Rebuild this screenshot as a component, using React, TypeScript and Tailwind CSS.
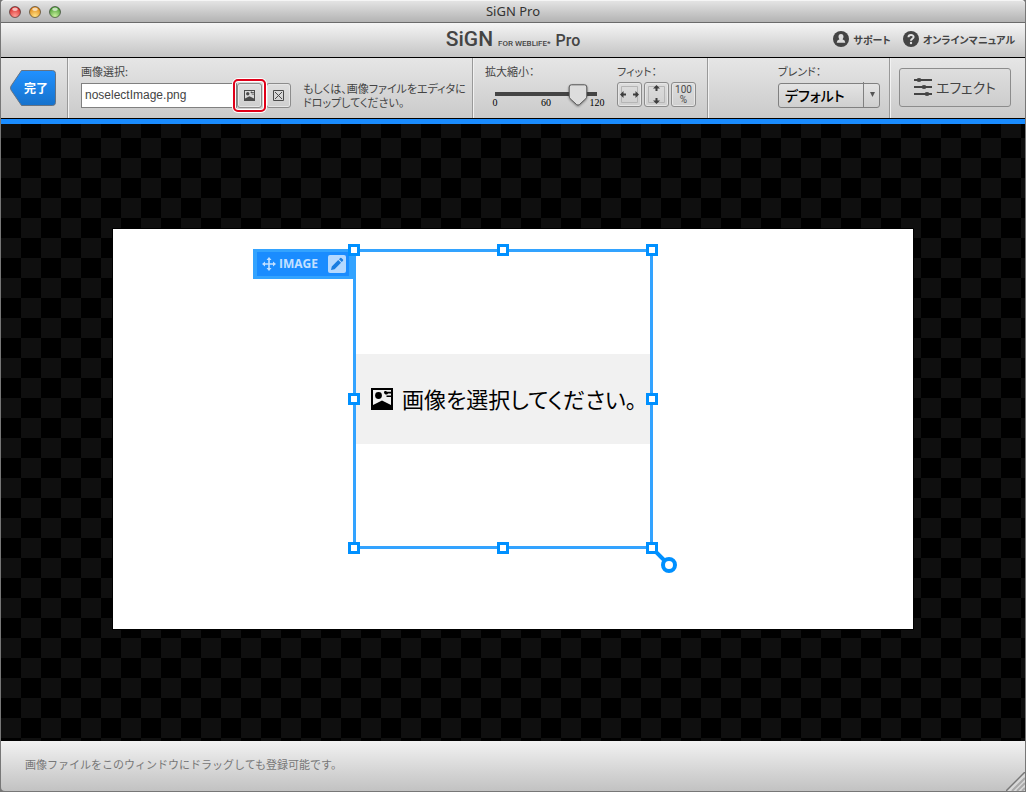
import { useState } from "react";

const PictureIcon = ({ className = "" }: { className?: string }) => (
  <svg viewBox="0 0 22 22" className={className} fill="currentColor" aria-hidden="true">
    <path fillRule="evenodd" d="M0 0H22V22H0ZM2 2V17L11 12.5L20 17V2Z" />
    <circle cx="7.5" cy="7.5" r="3.4" />
    <path d="M13 4.5C13 2.8 15.5 2.8 16 3.8H20V5.5H17C16.5 7 13.5 7 13 4.5ZM15.5 7.5H20V9H15.5Z" />
  </svg>
);

const MoveIcon = () => (
  <svg viewBox="0 0 14 14" className="size-3.5" fill="currentColor" aria-hidden="true">
    <path d="M7 0L9.5 3H7.8V6.2H11V4.5L14 7L11 9.5V7.8H7.8V11H9.5L7 14L4.5 11H6.2V7.8H3V9.5L0 7L3 4.5V6.2H6.2V3H4.5Z" />
  </svg>
);

const PencilIcon = () => (
  <svg viewBox="0 0 14 14" className="size-3.5" fill="currentColor" aria-hidden="true">
    <path d="M1 13L1.8 9.4L8.2 3L11 5.8L4.6 12.2ZM9 2.2L10.2 1Q10.8.6 11.4 1L13 2.6Q13.4 3.2 13 3.8L11.8 5Z" />
  </svg>
);

const TrafficLight = ({ label, light, dark }: { label: string; light: string; dark: string }) => (
  <button type="button" aria-label={label} className="size-3">
    <svg viewBox="0 0 12 12" className="size-3" aria-hidden="true">
      <defs>
        <radialGradient id={label} cx="0.5" cy="0.85" r="0.75">
          <stop offset="0" stopColor={light} />
          <stop offset="1" stopColor={dark} />
        </radialGradient>
      </defs>
      <circle cx="6" cy="6" r="5.5" fill={`url(#${label})`} stroke="#000" strokeOpacity="0.45" />
      <ellipse cx="6" cy="3.2" rx="2.8" ry="1.7" fill="#fff" fillOpacity="0.65" />
    </svg>
  </button>
);

const handles = [
  "-left-2 -top-2",
  "left-[141px] -top-2",
  "-right-2 -top-2",
  "-left-2 top-[141px]",
  "-right-2 top-[141px]",
  "-left-2 -bottom-2",
  "left-[141px] -bottom-2",
  "-right-2 -bottom-2",
];

const iconButton =
  "flex size-[25px] shrink-0 items-center justify-center rounded-[3px] border border-[#8c8c8c] bg-linear-to-b from-[#dedede] to-[#cfcfcf] text-[#4a4a4a] shadow-[inset_0_0_0_1px_#e6e6e6]";
const section = "border-r border-[#999] shadow-[1px_0_0_#f2f2f2] pt-1.5";
const caption = "block text-[11px] leading-[15px] text-[#444]";

const WindowHeader = () => (
  <>
    <div className="flex h-[23px] items-center rounded-t border-b border-[#6b6b6b] bg-linear-to-b from-[#e6e6e6] to-[#b3b3b3] px-2 pt-0.5 shadow-[inset_0_1px_0_#f5f5f5]">
      <div className="flex flex-1 gap-2">
        <TrafficLight label="close" light="#ff9c94" dark="#d9312f" />
        <TrafficLight label="minimize" light="#ffe083" dark="#e08b1c" />
        <TrafficLight label="zoom" light="#c7f09b" dark="#4e9e38" />
      </div>
      <h1 className="font-['Noto_Sans',sans-serif] text-[13px] text-[#333]">SiGN Pro</h1>
      <div className="flex-1" />
    </div>
    <header className="flex h-[35px] items-center border-b border-black bg-linear-to-b from-[#f5f5f5] to-[#c4c4c4] px-2.5 pb-0.5 text-[#444]">
      <div className="flex-1" />
      <div className="flex items-baseline gap-[5px] font-['Roboto',sans-serif]">
        <span className="text-[21px] leading-7 font-medium">SiGN</span>
        <span className="text-[8px] font-medium">FOR WEBLiFE*</span>
        <span className="text-base font-medium">Pro</span>
      </div>
      <nav className="flex flex-1 justify-end gap-3 text-[10px] font-bold">
        <a href="#support" className="flex items-center gap-1">
          <svg viewBox="0 0 16 16" className="size-4" aria-hidden="true">
            <circle cx="8" cy="8" r="8" fill="#444" />
            <path d="M8 3C9.7 3 10.6 4.2 10.5 5.7C10.4 7 9.8 7.8 9.5 8.3Q12.2 9 12.3 11.8H3.7Q3.8 9 6.5 8.3C6.2 7.8 5.6 7 5.5 5.7C5.4 4.2 6.3 3 8 3Z" fill="#ddd" />
          </svg>
          サポート
        </a>
        <a href="#manual" className="flex items-center gap-1">
          <svg viewBox="0 0 16 16" className="size-4" aria-hidden="true">
            <circle cx="8" cy="8" r="8" fill="#444" />
            <path d="M5.5 6.2C5.5 3.2 10.6 3.3 10.6 6C10.6 7.8 8 7.7 8 9.8" fill="none" stroke="#e2e2e2" strokeWidth="2" />
            <circle cx="8" cy="12" r="1.2" fill="#e2e2e2" />
          </svg>
          オンラインマニュアル
        </a>
      </nav>
    </header>
  </>
);

const Toolbar = () => {
  const [fileName, setFileName] = useState("noselectImage.png");
  const [scale, setScale] = useState(98);

  return (
    <div className="flex h-[61px] border-b border-black bg-linear-to-b from-[#e6e6e6] to-[#cacaca]">
      <div className={`${section} flex w-[67px] shrink-0 pl-[9px]`}>
        <button type="button" className="mt-1.5 grid h-9 w-[46px] text-xs font-bold text-white">
          <svg viewBox="0 0 46 36" className="col-start-1 row-start-1 h-9 w-[46px]" aria-hidden="true">
            <defs>
              <linearGradient id="done" x1="0" y1="0" x2="0" y2="1">
                <stop offset="0" stopColor="#2191ff" />
                <stop offset="1" stopColor="#1672cc" />
              </linearGradient>
            </defs>
            <path d="M11.5.5H42.5Q45.5.5 45.5 3.5V32.5Q45.5 35.5 42.5 35.5H11.5L1 20Q0 18 1 16Z" fill="url(#done)" stroke="#667382" />
          </svg>
          <span className="col-start-1 row-start-1 self-center pl-1.5">完了</span>
        </button>
      </div>

      <div className={`${section} min-w-0 flex-1 pl-[13px]`}>
        <label htmlFor="file" className={caption}>画像選択:</label>
        <div className="flex items-center">
          <div className="relative mt-[3px] flex">
            <input
              id="file"
              value={fileName}
              onChange={(e) => setFileName(e.target.value)}
              className="h-[25px] w-[156px] border border-[#808080] bg-white px-[3px] pb-0.5 font-['Liberation_Sans',sans-serif] text-xs text-[#444] outline-none"
            />
            <button type="button" aria-label="画像を選択" className={iconButton}>
              <PictureIcon className="size-[11px]" />
            </button>
            <div className="pointer-events-none absolute -top-1 -right-1 size-[33px] rounded-[5px] border-2 border-[#e00019] shadow-[inset_0_0_0_1px_#fff,0_0_0_1px_#fff]" />
          </div>
          <button type="button" aria-label="画像を解除" className={`${iconButton} mt-[3px] ml-1`}>
            <svg viewBox="0 0 11 11" className="size-[11px]" fill="none" stroke="currentColor" aria-hidden="true">
              <path d="M.5.5H10.5V10.5H.5ZM2 2L9 9M9 2L2 9" />
            </svg>
          </button>
          <p className="ml-3 pt-0.5 text-[11px] leading-[14px] whitespace-nowrap text-[#444]">
            もしくは、画像ファイルをエディタに
            <br />
            ドロップしてください。
          </p>
        </div>
      </div>

      <div className={`${section} flex w-[235px] shrink-0 pl-3`}>
        <div className="w-[132px]">
          <label htmlFor="scale" className={caption}>拡大縮小：</label>
          <div className="relative mt-[5px] ml-2.5 h-[23px] w-[102px]">
            <div className="h-2" />
            <div className="h-1 bg-[#444]" />
            <div className="-mx-2 flex justify-between text-center font-['Liberation_Serif',serif] text-[10px] leading-[14px] text-black">
              <span className="w-4">0</span>
              <span className="w-4">60</span>
              <span className="w-4">120</span>
            </div>
            <input
              id="scale"
              type="range"
              min={0}
              max={120}
              value={scale}
              onChange={(e) => setScale(Number(e.target.value))}
              className="absolute inset-0 m-0 w-full cursor-pointer opacity-0"
            />
            <svg
              viewBox="0 0 20 23"
              className="pointer-events-none absolute top-0 h-[23px] w-5 -translate-x-1/2 drop-shadow-[0_1px_1px_#0006]"
              style={{ left: `${(scale / 120) * 100}%` }}
              aria-hidden="true"
            >
              <path d="M3.5.8H16.5Q18.8.8 18.8 3V12Q18.8 13.5 17.8 14.7L11.5 20.5Q10 21.8 8.5 20.5L2.2 14.7Q1.2 13.5 1.2 12V3Q1.2.8 3.5.8Z" fill="#ddd" stroke="#555" />
            </svg>
          </div>
        </div>
        <div>
          <span className={caption}>フィット：</span>
          <div className="mt-[3px] flex gap-0.5">
            <button type="button" aria-label="横幅に合わせる" className={iconButton}>
              <svg viewBox="0 0 19 19" className="size-[19px]" aria-hidden="true">
                <path d="M1.5 1.5H17.5V17.5H1.5Z" fill="none" stroke="#b5b5b5" />
                <path d="M0 9.5L3.5 6V8.5H6V10.5H3.5V13ZM19 9.5L15.5 6V8.5H13V10.5H15.5V13Z" fill="#3d3d3d" />
              </svg>
            </button>
            <button type="button" aria-label="高さに合わせる" className={iconButton}>
              <svg viewBox="0 0 19 19" className="size-[19px]" aria-hidden="true">
                <path d="M1.5 1.5H17.5V17.5H1.5Z" fill="none" stroke="#b5b5b5" />
                <path d="M9.5 0L13 3.5H10.5V6H8.5V3.5H6ZM9.5 19L13 15.5H10.5V13H8.5V15.5H6Z" fill="#3d3d3d" />
              </svg>
            </button>
            <button type="button" className={`${iconButton} flex-col font-['Roboto',sans-serif] text-[10px] leading-[10px]`}>
              <span>100</span>
              <span>%</span>
            </button>
          </div>
        </div>
      </div>

      <div className={`${section} w-[182px] shrink-0 pl-[70px]`}>
        <label htmlFor="blend" className={caption}>ブレンド：</label>
        <div className="relative mt-[3px] h-[25px] w-[102px]">
          <select
            id="blend"
            className="h-full w-full appearance-none rounded-[3px] border border-[#808080] bg-linear-to-b from-[#e4e4e4] to-[#cfcfcf] pl-1.5 text-sm leading-5 font-medium text-black outline-none"
          >
            <option>デフォルト</option>
            <option>乗算</option>
            <option>スクリーン</option>
          </select>
          <div className="pointer-events-none absolute inset-y-0 right-0 flex w-[17px] items-center justify-center border-l border-[#808080]">
            <svg viewBox="0 0 5 5" className="size-[5px]" aria-hidden="true">
              <path d="M0 0H5L2.5 5Z" fill="#555" />
            </svg>
          </div>
        </div>
      </div>

      <div className="shrink-0 pt-2.5 pr-3.5 pl-[9px]">
        <button
          type="button"
          className="flex h-[39px] w-28 items-center justify-center gap-1 rounded-[3px] border border-[#8c8c8c] bg-linear-to-b from-[#dedede] to-[#cdcdcd] pb-0.5 text-sm text-[#444]"
        >
          <svg viewBox="0 0 18 18" className="size-[18px]" fill="#444" aria-hidden="true">
            <path d="M0 1H18V3H0ZM0 8H18V10H0ZM0 15H18V17H0Z" />
            <ellipse cx="5" cy="2" rx="2.5" ry="2" />
            <ellipse cx="10" cy="9" rx="2.5" ry="2" />
            <ellipse cx="13" cy="16" rx="2.5" ry="2" />
          </svg>
          エフェクト
        </button>
      </div>
    </div>
  );
};

const ImageLayer = () => (
  <div className="absolute top-5 left-60 size-[300px] border-3 border-[#33a3ff]">
    <div className="mt-[102px] flex h-[90px] items-center gap-[9px] bg-[#f1f1f1] pl-[15px] text-[22px] whitespace-nowrap text-black">
      <PictureIcon className="size-[22px] shrink-0" />
      <span className="pb-0.5">画像を選択してください。</span>
    </div>

    <div className="absolute -top-[3px] -left-[103px] flex h-[30px] w-[103px] border-3 border-r-[7px] border-l-4 border-[#33a3ff] bg-[#1a8cff]">
      <div className="flex flex-1 items-center gap-[3px] pr-[3px] pl-[5px] text-[#c3e0ff]">
        <MoveIcon />
        <span className="flex-1 font-['Open_Sans',sans-serif] text-xs font-bold">IMAGE</span>
        <button type="button" aria-label="編集" className="flex size-[18px] items-center justify-center rounded-xs bg-[#b5d9ff] text-[#1a7de0]">
          <PencilIcon />
        </button>
      </div>
    </div>

    <svg viewBox="0 0 26 26" className="absolute -right-[27px] -bottom-[27px] size-[26px]" fill="none" stroke="#0090ff" strokeWidth="4" aria-hidden="true">
      <path d="M0 0L13 13" />
      <circle cx="18" cy="18" r="6" fill="#fff" />
    </svg>
    {handles.map((position) => (
      <div key={position} className={`absolute size-3 border-3 border-[#0090ff] bg-white ${position}`} />
    ))}
  </div>
);

const App = () => {
  return (
    <div className="flex min-h-screen flex-col border-x border-b border-[#777] bg-[#777] font-['Noto_Sans_CJK_JP',sans-serif] [font-feature-settings:'palt']">
      <WindowHeader />
      <Toolbar />
      <main className="flex-1 border-t-[5px] border-[#1a8cff] bg-[repeating-conic-gradient(#000_0_25%,#0f0f0f_0_50%)] bg-size-[40px_40px] bg-position-[0_-6px] pt-[105px]">
        <div className="relative mx-auto h-[400px] w-[800px] bg-white shadow-[0_0_0_1px_#000]">
          <ImageLayer />
        </div>
      </main>
      <footer className="flex h-[50px] items-center justify-between rounded-b bg-linear-to-b from-[#f2f2f2] to-[#c2c2c2] pl-6 text-[11px] text-[#777] [font-feature-settings:normal]">
        <p className="pb-1">画像ファイルをこのウィンドウにドラッグしても登録可能です。</p>
        <svg viewBox="0 0 19 19" className="size-[19px] self-end" fill="none" aria-hidden="true">
          <path d="M0 19L19 0V19Z" fill="#d8d8d8" />
          <path d="M6 19L19 6M11 19L19 11M16 19L19 16" stroke="#aaa" strokeWidth="2" />
          <path d="M0 19L19 0" stroke="#777" strokeWidth="1.5" />
        </svg>
      </footer>
    </div>
  );
};

export default App;
